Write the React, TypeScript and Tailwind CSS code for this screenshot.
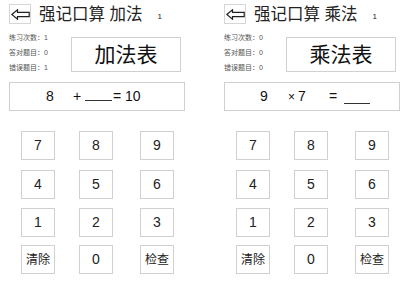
import React from 'react';

const FONT = '"Liberation Sans", "Noto Sans CJK SC", sans-serif';

type Panel = {
  title: string;
  table: string;
  stats: [string, string, string];
  eq: React.ReactNode;
};

const Blank: React.FC<{ w: string }> = ({ w }) => (
  <span className={`inline-block ${w} h-[14px] border-b border-[#333]`} />
);

const BackArrow: React.FC = () => (
  <div className="w-[22px] h-[20px] border border-[#d6d6d6] flex items-center justify-center">
    <svg width="19" height="11" viewBox="0 0 19 11">
      <path
        d="M0.8 5.5 L6.5 0.8 L6.5 3.4 L18.2 3.4 L18.2 7.6 L6.5 7.6 L6.5 10.2 Z"
        fill="none"
        stroke="#222"
        strokeWidth="1.2"
        strokeLinejoin="miter"
      />
    </svg>
  </div>
);

const Key: React.FC<{ label: string; ml: string }> = ({ label, ml }) => {
  const small = label.length > 1;
  return (
    <div
      className={`${ml} w-[34px] h-[29px] border border-[#d0d0d0] flex items-center justify-center text-[#222] ${
        small ? 'text-[12px]' : 'text-[14px]'
      }`}
    >
      {label}
    </div>
  );
};

const rows = [
  { keys: ['7', '8', '9'], mt: 'mt-[20px]' },
  { keys: ['4', '5', '6'], mt: 'mt-[10px]' },
  { keys: ['1', '2', '3'], mt: 'mt-[9px]' },
  { keys: ['清除', '0', '检查'], mt: 'mt-[8px]' },
];

const Column: React.FC<Panel> = ({ title, table, stats, eq }) => (
  <div className="w-[176px] flex flex-col">
    <div className="mt-[4px] h-[20px] flex items-center">
      <BackArrow />
      <span className="ml-[8px] text-[16.5px] leading-none text-[#222]">{title}</span>
      <span className="ml-[15px] mt-[5px] text-[8px] text-[#222]">1</span>
    </div>

    <div className="mt-[13px] h-[35px] flex items-start">
      <div className="w-[62px] -mt-[7px] flex flex-col text-[7px] leading-[15px] text-[#555]">
        {stats.map((s) => (
          <span key={s}>{s}</span>
        ))}
      </div>
      <div className="w-[110px] h-[35px] border border-[#d0d0d0] flex items-center justify-center text-[21px] text-[#111]">
        {table}
      </div>
    </div>

    <div className="mt-[10px] h-[29px] border border-[#d0d0d0] flex items-center text-[14px] text-[#111]">
      {eq}
    </div>

    {rows.map((r) => (
      <div key={r.keys.join('')} className={`${r.mt} flex`}>
        <Key label={r.keys[0]} ml="ml-[12px]" />
        <Key label={r.keys[1]} ml="ml-[24px]" />
        <Key label={r.keys[2]} ml="ml-[27px]" />
      </div>
    ))}
  </div>
);

export default function App() {
  return (
    <div
      className="w-[420px] h-[299px] bg-white flex pl-[9px] gap-[39px] overflow-hidden"
      style={{ fontFamily: FONT }}
    >
      <Column
        title="强记口算 加法"
        table="加法表"
        stats={['练习次数：1', '答对题目：0', '错误题目：1']}
        eq={
          <div className="flex items-center pl-[36px]">
            <span className="w-[27px]">8</span>
            <span className="w-[12px]">+</span>
            <span className="w-[28px]"><Blank w="w-[27px]" /></span>
            <span className="w-[12px]">=</span>
            <span>10</span>
          </div>
        }
      />
      <Column
        title="强记口算 乘法"
        table="乘法表"
        stats={['练习次数：0', '答对题目：0', '错误题目：0']}
        eq={
          <div className="flex items-center pl-[35px]">
            <span className="w-[28px]">9</span>
            <span className="w-[10px] text-[12px]">×</span>
            <span className="w-[31px]">7</span>
            <span className="w-[15px]">=</span>
            <Blank w="w-[26px]" />
          </div>
        }
      />
    </div>
  );
}
